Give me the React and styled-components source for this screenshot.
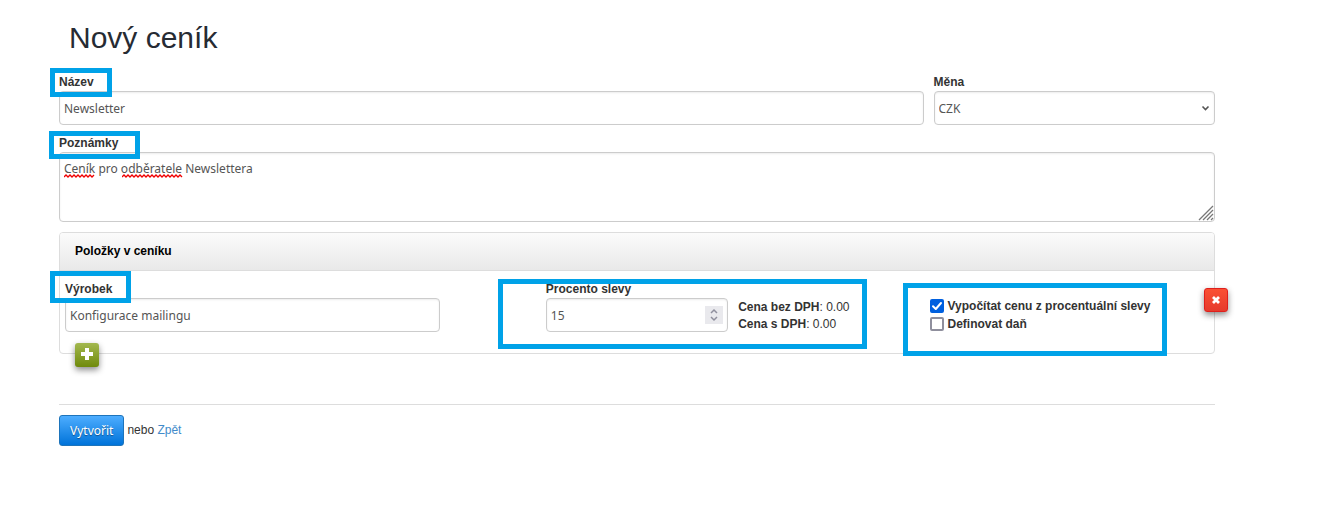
import { useState } from 'react';
import styled, { createGlobalStyle, css } from 'styled-components';

const GlobalStyle = createGlobalStyle`
  * {
    box-sizing: border-box;
  }
  body {
    margin: 0;
    background-color: #fff;
    color: #333;
    font-family: 'Liberation Sans', Arial, sans-serif;
    font-size: 12px;
    line-height: 17px;
  }
`;

const Page = styled.main`
  padding: 20px 113px 60px 59px;
`;

const Title = styled.h1`
  margin: 0 0 18px;
  padding-left: 10px;
  color: #262b33;
  font-size: 30px;
  font-weight: 400;
  line-height: 36px;
`;

const Form = styled.form`
  display: flex;
  flex-direction: column;
`;

const Row = styled.div`
  display: grid;
  grid-template-columns: repeat(12, minmax(0, 1fr));
  column-gap: 10px;
`;

const FormRow = styled(Row)`
  margin-bottom: 10px;
`;

const Field = styled.div`
  position: relative;
  display: flex;
  flex-direction: column;
  grid-column: ${(props) => props.$column};
`;

const Label = styled.label`
  font-weight: 700;
`;

const Control = styled.div`
  position: relative;
  display: flex;
`;

const inputStyle = css`
  width: 100%;
  margin: 0;
  border: 1px solid #ccc;
  border-radius: 4px;
  background-color: #fff;
  box-shadow: inset 0 1px 2px rgba(0, 0, 0, 0.08);
  color: #555;
  font-family: 'Noto Sans', Tahoma, sans-serif;
  font-size: 12px;
  line-height: 17px;
  outline: none;
`;

const Input = styled.input`
  ${inputStyle}
  height: 34px;
  padding: 0 4px;
  appearance: textfield;
  &::-webkit-inner-spin-button {
    display: none;
  }
`;

const Select = styled.select`
  ${inputStyle}
  height: 34px;
  padding: 0 20px 0 4px;
  appearance: none;
`;

const TextArea = styled.textarea`
  ${inputStyle}
  display: block;
  height: 70px;
  padding: 7px 4px;
  resize: none;
`;

const SelectArrow = styled.svg`
  position: absolute;
  top: 14px;
  right: 5px;
  pointer-events: none;
`;

const Grip = styled.svg`
  position: absolute;
  right: 1px;
  bottom: 1px;
  pointer-events: none;
`;

const Squiggle = styled.svg`
  position: absolute;
  top: 22px;
  left: ${(props) => props.$left}px;
  pointer-events: none;
`;

const Spinner = styled.span`
  position: absolute;
  top: 8px;
  right: 5px;
  width: 18px;
  height: 18px;
  background-color: #e9e9ed;
  pointer-events: none;
  svg {
    display: block;
  }
`;

const Mark = styled.span`
  position: absolute;
  z-index: 2;
  top: ${(props) => props.$top}px;
  left: ${(props) => props.$left}px;
  width: ${(props) => props.$width}px;
  height: ${(props) => props.$height}px;
  border: 5px solid #00a2e8;
  pointer-events: none;
`;

const Panel = styled.section`
  border: 1px solid #ddd;
  border-radius: 4px;
`;

const PanelHeader = styled.h2`
  margin: 0;
  padding: 10px 15px;
  border-bottom: 1px solid #ddd;
  border-radius: 3px 3px 0 0;
  background-image: linear-gradient(#fbfbfb, #e9e9e9);
  color: #000;
  font-size: 12px;
  font-weight: 700;
  line-height: 17px;
`;

const PanelBody = styled.div`
  position: relative;
  padding: 10px 5px 20px;
`;

const Prices = styled.div`
  grid-column: span 2;
  padding-top: 18px;
`;

const Options = styled.div`
  position: relative;
  grid-column: span 3;
  padding-top: 16px;
`;

const Option = styled.label`
  display: flex;
  align-items: center;
  gap: 3px;
  height: 18px;
  font-weight: 700;
  white-space: nowrap;
`;

const Box = styled.span`
  position: relative;
  display: flex;
  svg {
    position: absolute;
    inset: 0;
    pointer-events: none;
  }
`;

const Checkbox = styled.input`
  width: 14px;
  height: 14px;
  margin: 0;
  appearance: none;
  border: 2px solid #8f8f9d;
  border-radius: 2px;
  background-color: #fff;
  &:checked {
    border-color: #0060df;
    background-color: #0060df;
  }
`;

const IconButton = styled.button`
  position: absolute;
  display: flex;
  align-items: center;
  justify-content: center;
  width: 24px;
  height: 24px;
  padding: 0;
  border: 0;
  border-radius: 3px;
  box-shadow: 0 3px 6px rgba(0, 0, 0, 0.45);
  cursor: pointer;
`;

const AddButton = styled(IconButton)`
  bottom: -14px;
  left: 15px;
  background-image: linear-gradient(#a3b84f, #6f8a0b);
`;

const RemoveButton = styled(IconButton)`
  top: 17px;
  right: -14px;
  border: 1px solid #df1f1c;
  background-image: linear-gradient(#fa5033, #e63a2c);
`;

const Actions = styled.footer`
  display: flex;
  align-items: center;
  gap: 3px;
  margin-top: 50px;
  padding-top: 10px;
  border-top: 1px solid #ddd;
`;

const SubmitButton = styled.button`
  height: 31px;
  padding: 0 10px;
  border: 1px solid #1d74bb;
  border-radius: 3px;
  background-image: linear-gradient(#4dadff, #0073d9);
  color: #fff;
  font-family: 'Noto Sans', Tahoma, sans-serif;
  font-size: 12px;
  line-height: 17px;
  text-shadow: 0 1px 1px rgba(0, 0, 0, 0.4);
  cursor: pointer;
`;

const Link = styled.a`
  color: #428bca;
  text-decoration: none;
`;

const Wave = ({ left, width }) => {
  let d = 'M0 3';
  for (let x = 2; x <= width; x += 2) {
    d += ` L${x} ${x % 4 ? 1 : 3}`;
  }
  return (
    <Squiggle $left={left} width={width} height="4" aria-hidden="true">
      <path d={d} fill="none" stroke="#f00000" strokeWidth="1.3" />
    </Squiggle>
  );
};

const CheckOption = ({ id, label, initial }) => {
  const [checked, setChecked] = useState(initial);
  return (
    <Option htmlFor={id}>
      <Box>
        <Checkbox
          id={id}
          type="checkbox"
          checked={checked}
          onChange={(e) => setChecked(e.target.checked)}
        />
        {checked && (
          <svg width="14" height="14" aria-hidden="true">
            <path d="M3 7.2 L5.8 10 L11 4" fill="none" stroke="#fff" strokeWidth="2" strokeLinecap="round" strokeLinejoin="round" />
          </svg>
        )}
      </Box>
      {label}
    </Option>
  );
};

const App = () => {
  return (
    <Page>
      <GlobalStyle />
      <Title>Nový ceník</Title>
      <Form onSubmit={(e) => e.preventDefault()}>
        <FormRow>
          <Field $column="span 9">
            <Label htmlFor="name">Název</Label>
            <Input id="name" defaultValue="Newsletter" />
            <Mark $top={-6} $left={-9} $width={62} $height={29} />
          </Field>
          <Field $column="span 3">
            <Label htmlFor="currency">Měna</Label>
            <Control>
              <Select id="currency" defaultValue="CZK">
                <option>CZK</option>
                <option>EUR</option>
              </Select>
              <SelectArrow width="9" height="7" aria-hidden="true">
                <path d="M1.5 1.5 L4.5 4.5 L7.5 1.5" fill="none" stroke="#555" strokeWidth="1.6" />
              </SelectArrow>
            </Control>
          </Field>
        </FormRow>
        <FormRow>
          <Field $column="1 / -1">
            <Label htmlFor="notes">Poznámky</Label>
            <Control>
              <TextArea id="notes" spellCheck={false} defaultValue="Ceník pro odběratele Newslettera" />
              <Wave left={5} width={31} />
              <Wave left={63} width={61} />
              <Grip width="16" height="16" aria-hidden="true">
                <path d="M1 15 L15 1 M5 15 L15 5 M9 15 L15 9 M13 15 L15 13" stroke="#777" strokeWidth="1.3" />
              </Grip>
            </Control>
            <Mark $top={-4} $left={-10} $width={91} $height={28} />
          </Field>
        </FormRow>

        <Panel>
          <PanelHeader>Položky v ceníku</PanelHeader>
          <PanelBody>
            <Row>
              <Field $column="span 4">
                <Label htmlFor="product">Výrobek</Label>
                <Input id="product" defaultValue="Konfigurace mailingu" />
                <Mark $top={-10} $left={-15} $width={81} $height={32} />
              </Field>
              <Field $column="6 / span 2">
                <Label htmlFor="discount">Procento slevy</Label>
                <Control>
                  <Input id="discount" type="number" defaultValue="15" />
                  <Spinner>
                    <svg width="18" height="18" aria-hidden="true">
                      <path d="M6 7 L9 4 L12 7 M6 11 L9 14 L12 11" fill="none" stroke="#8f8f9d" strokeWidth="1.5" />
                    </svg>
                  </Spinner>
                </Control>
                <Mark $top={-2} $left={-48} $width={369} $height={70} />
              </Field>
              <Prices>
                <div><b>Cena bez DPH</b>: 0.00</div>
                <div><b>Cena s DPH</b>: 0.00</div>
              </Prices>
              <Options>
                <CheckOption id="calculate" label="Vypočítat cenu z procentuální slevy" initial={true} />
                <CheckOption id="tax" label="Definovat daň" initial={false} />
                <Mark $top={2} $left={-27} $width={264} $height={73} />
              </Options>
            </Row>
            <RemoveButton type="button" aria-label="Odebrat">
              <svg width="10" height="10" aria-hidden="true">
                <path d="M2 2 L8 8 M8 2 L2 8" stroke="#fff" strokeWidth="2.8" />
              </svg>
            </RemoveButton>
            <AddButton type="button" aria-label="Přidat">
              <svg width="14" height="14" aria-hidden="true">
                <path d="M7 0 V12 M1 6 H13" stroke="#fff" strokeWidth="4" />
              </svg>
            </AddButton>
          </PanelBody>
        </Panel>

        <Actions>
          <SubmitButton type="submit">Vytvořit</SubmitButton>
          <span>nebo <Link href="#zpet">Zpět</Link></span>
        </Actions>
      </Form>
    </Page>
  );
};

export default App;
